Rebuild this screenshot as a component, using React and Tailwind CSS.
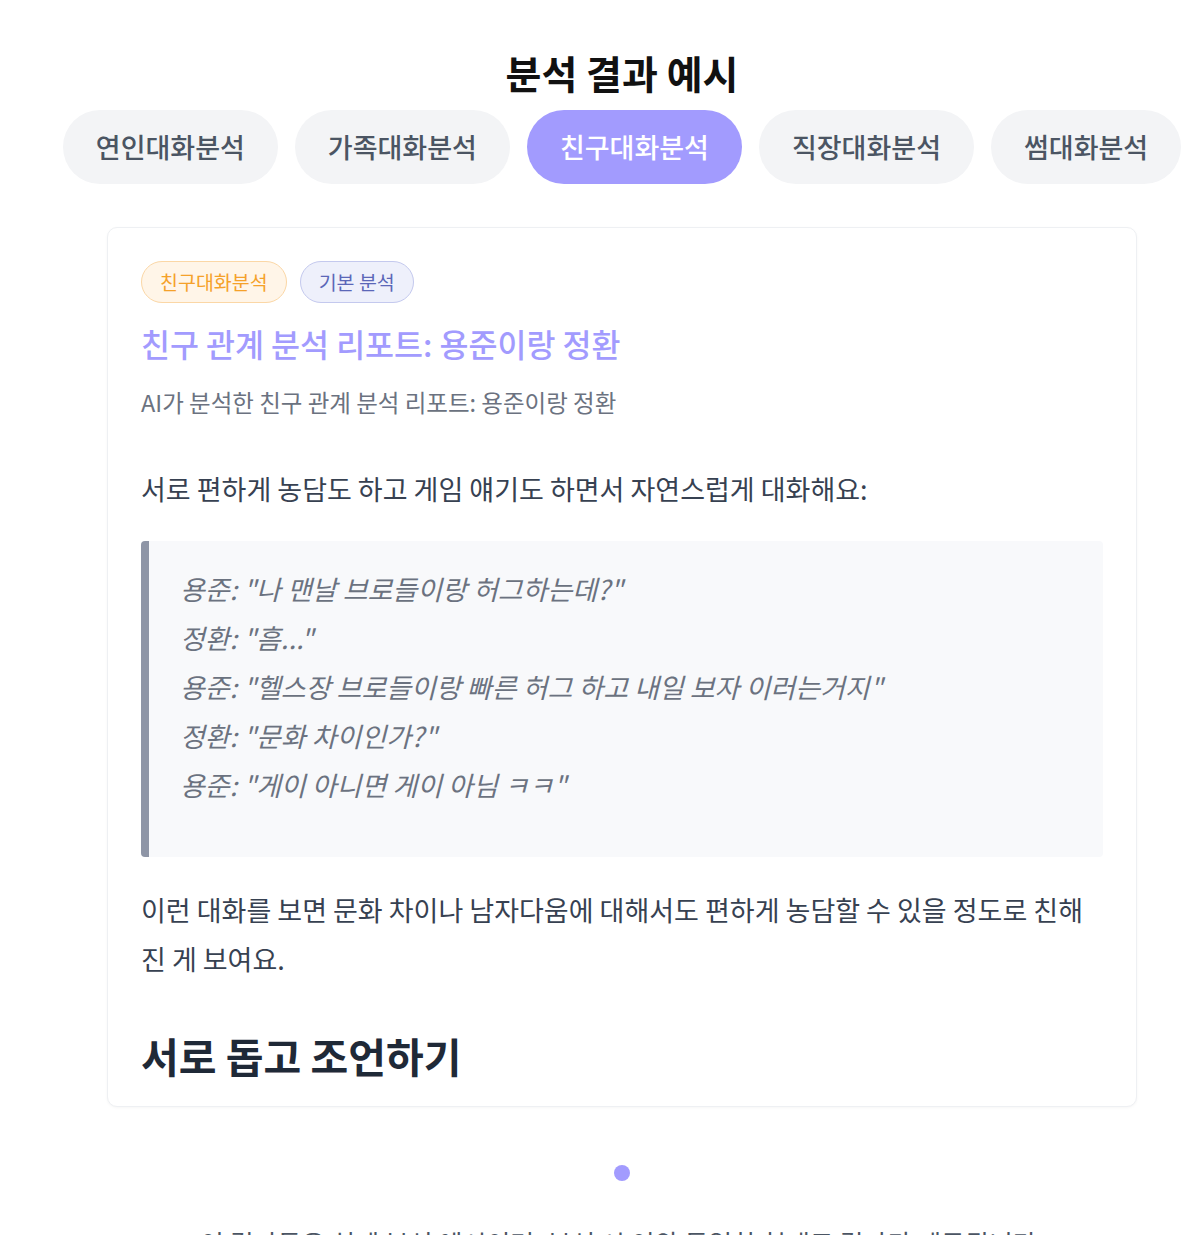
const tabs = ['연인대화분석', '가족대화분석', '친구대화분석', '직장대화분석', '썸대화분석'];

const quote = [
  '용준: "나 맨날 브로들이랑 허그하는데?"',
  '정환: "흠..."',
  '용준: "헬스장 브로들이랑 빠른 허그 하고 내일 보자 이러는거지"',
  '정환: "문화 차이인가?"',
  '용준: "게이 아니면 게이 아님 ㅋㅋ"',
];

export default function App() {
  const active = 2;

  return (
    <div className="w-full h-[1235px] overflow-hidden bg-white" style={{ fontFamily: '"Noto Sans CJK KR", "Noto Sans", sans-serif' }}>
      <div className="w-[1244px] flex flex-col items-center pt-[48px]">
        <h2 className="text-[39px] leading-[48px] font-bold text-[#111111]">분석 결과 예시</h2>

        <div className="flex gap-[17px] mt-[14px]">
          {tabs.map((t, i) => (
            <button
              key={t}
              className={`h-[74px] px-[33px] rounded-full text-[27px] font-medium ${
                i === active ? 'bg-[#a29bfe] text-white' : 'bg-[#f3f4f6] text-[#4b5563]'
              }`}
            >
              {t}
            </button>
          ))}
        </div>

        <div className="w-[1030px] mt-[43px] bg-white border border-[#eef0f3] rounded-[10px] shadow-[0_1px_3px_rgba(0,0,0,0.04)] px-[33px] pt-[33px] pb-[27px]">
          <div className="flex gap-[13px]">
            <span className="h-[42px] px-[18px] flex items-center rounded-full border border-[#fbd7a6] bg-[#fff5e8] text-[#f5a12a] text-[19.5px]">
              친구대화분석
            </span>
            <span className="h-[42px] px-[18px] flex items-center rounded-full border border-[#c4c9ee] bg-[#eef0fb] text-[#5b67b8] text-[19.5px]">
              기본 분석
            </span>
          </div>

          <h3 className="mt-[20px] text-[31.5px] leading-[40px] font-medium text-[#a29bfe]">
            친구 관계 분석 리포트: 용준이랑 정환
          </h3>
          <p className="mt-[23px] text-[23.5px] leading-[32px] text-[#6b7280]">
            AI가 분석한 친구 관계 분석 리포트: 용준이랑 정환
          </p>

          <p className="mt-[46px] text-[27px] leading-[49px] text-[#374151]">
            서로 편하게 농담도 하고 게임 얘기도 하면서 자연스럽게 대화해요:
          </p>

          <blockquote className="mt-[28px] bg-[#f8f9fb] border-l-[8px] border-[#8e95a6] rounded-[4px] pl-[31px] pr-6 pt-[23px] pb-[48px]">
            {quote.map((q, i) => (
              <p key={i} className="text-[27px] leading-[49px] italic text-[#6b7280]">
                {q}
              </p>
            ))}
          </blockquote>

          <p className="mt-[28px] text-[27px] leading-[49px] text-[#374151]">
            이런 대화를 보면 문화 차이나 남자다움에 대해서도 편하게 농담할 수 있을 정도로 친해진 게 보여요.
          </p>

          <h4 className="mt-[48px] text-[41px] leading-[48px] font-bold text-[#1f2937]">서로 돕고 조언하기</h4>
        </div>

        <div className="mt-[58px] w-[16px] h-[16px] shrink-0 rounded-full bg-[#a29bfe]"></div>

        <p className="mt-[44px] text-[26px] leading-[36px] text-[#4b5563]">
          이 결과들은 실제 분석 예시이며, 분석 시 이와 동일한 형태로 결과가 제공됩니다.
        </p>
      </div>
    </div>
  );
}
